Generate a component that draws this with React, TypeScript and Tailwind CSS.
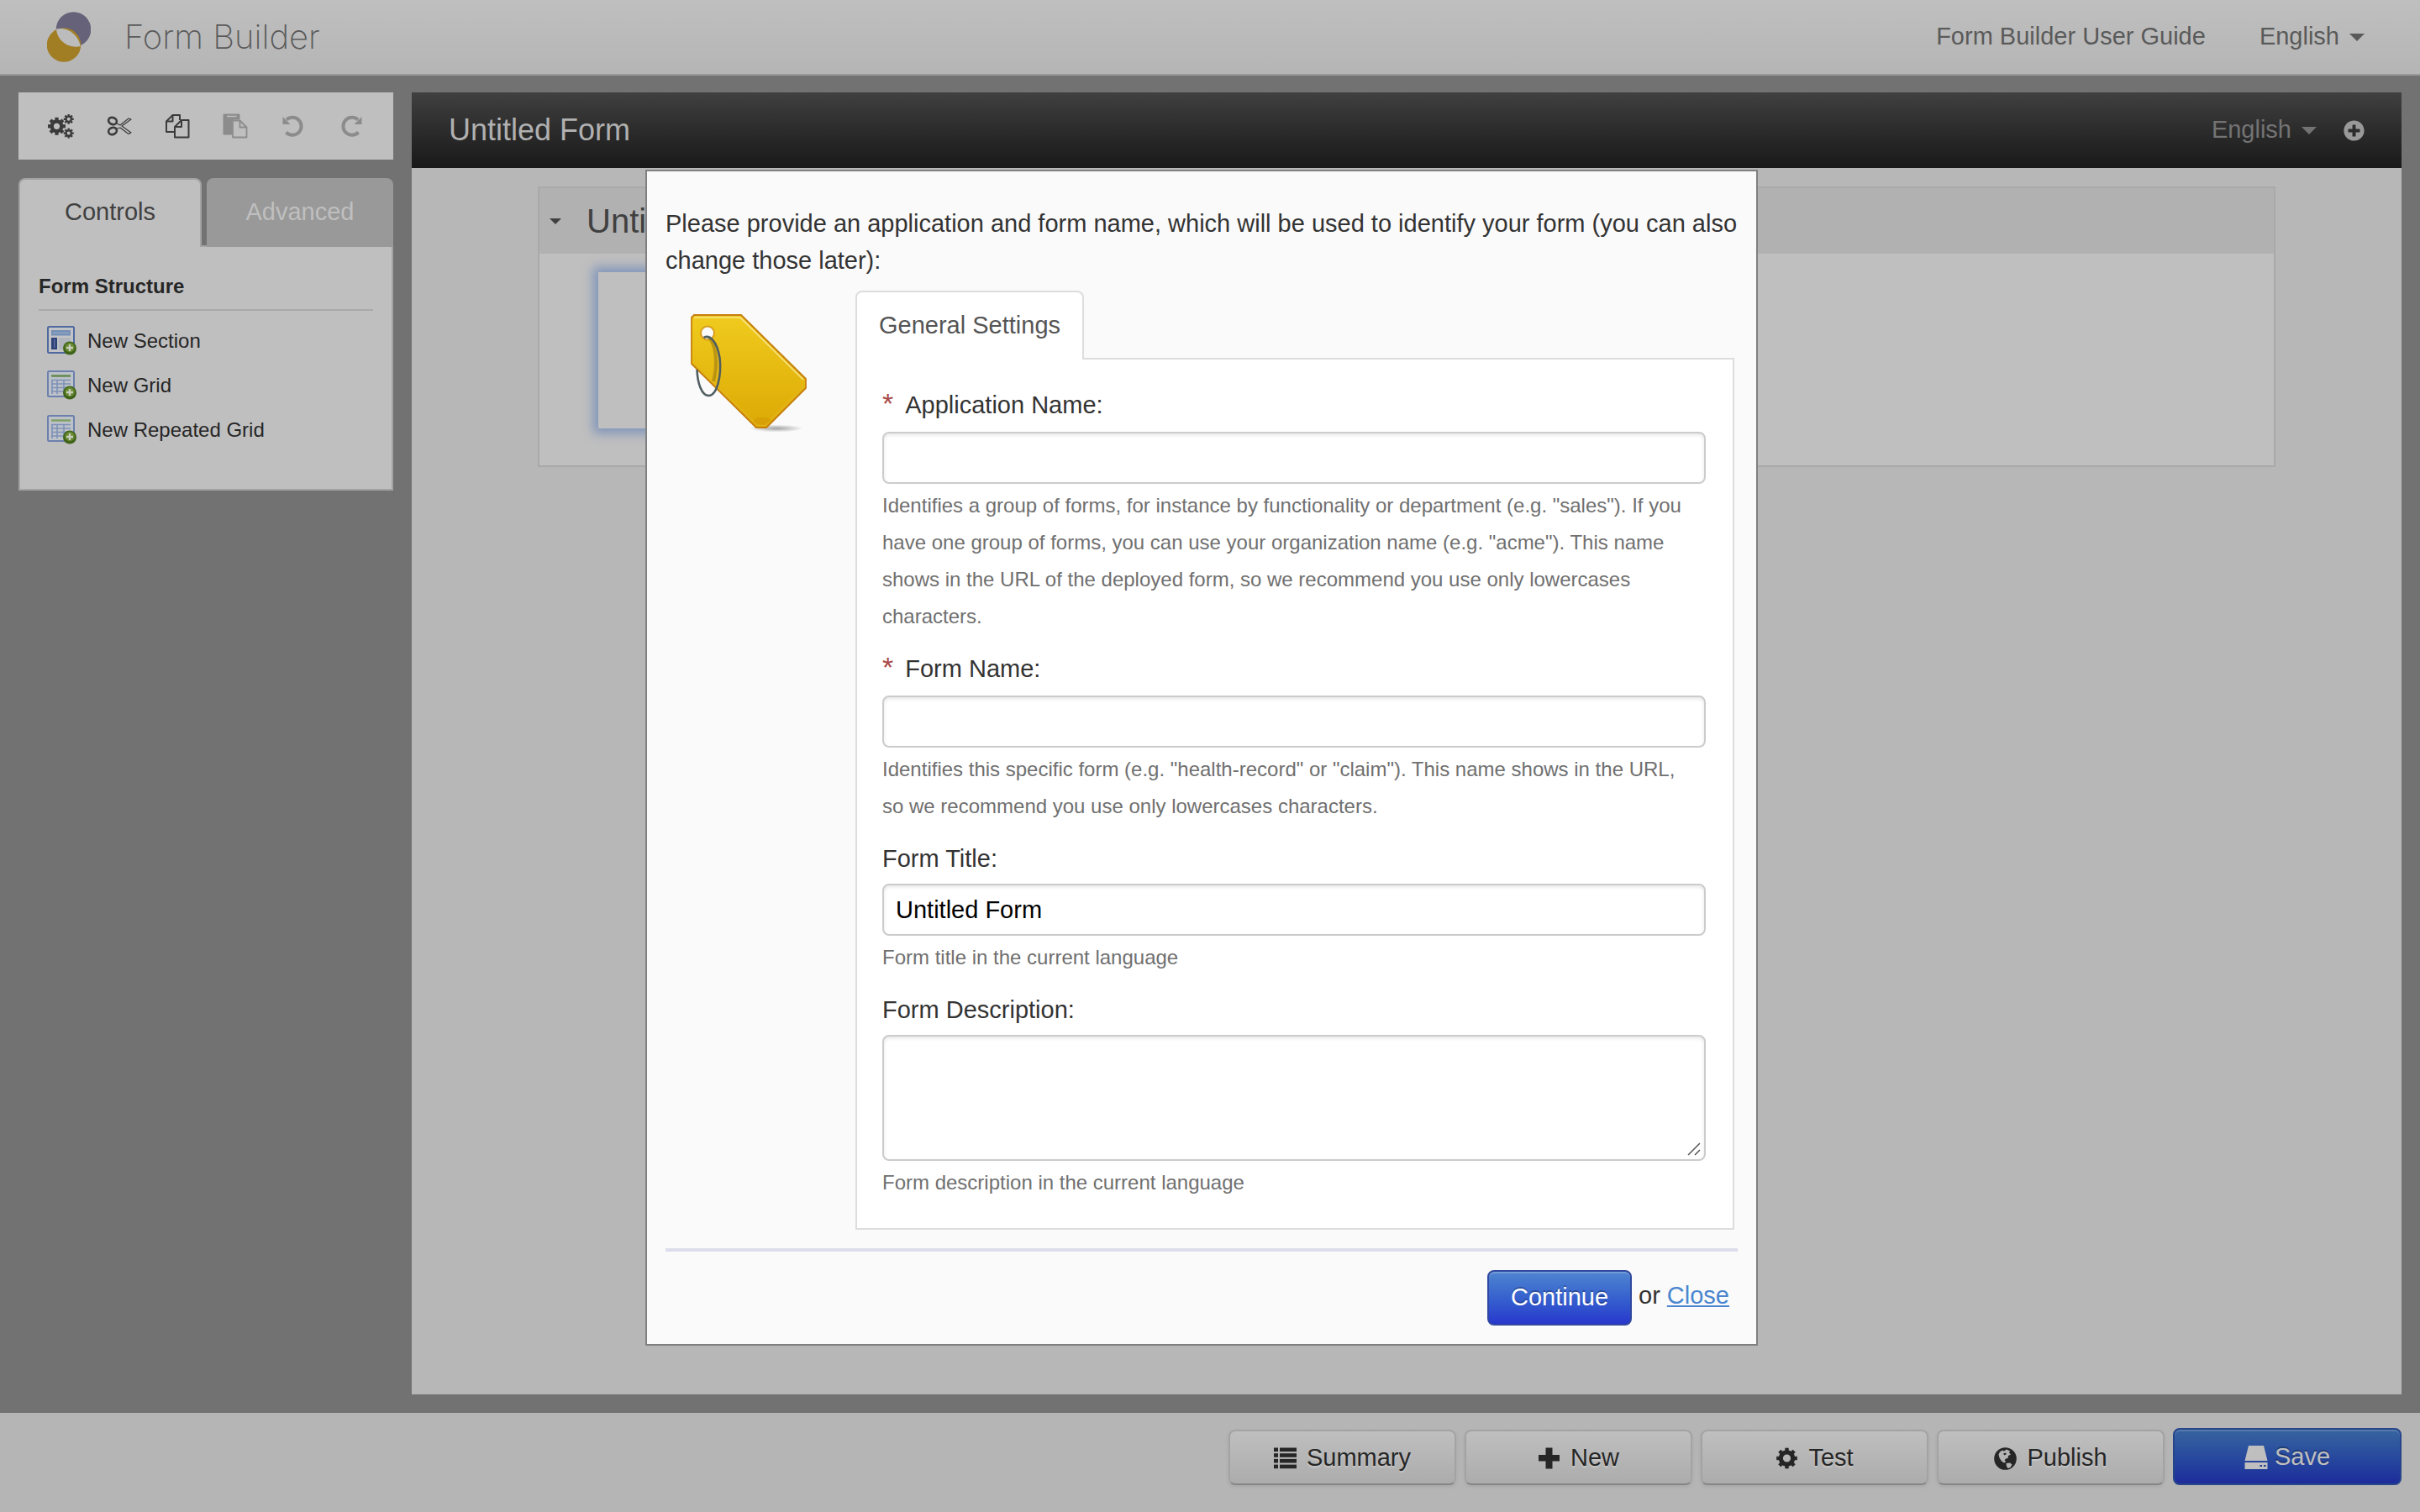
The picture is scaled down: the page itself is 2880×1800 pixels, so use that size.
import { FaPlusCircle } from "react-icons/fa";

function Logo() {
  return (
    <svg className="block" width="52" height="60" viewBox="0 0 52 60" aria-hidden="true">
      <circle cx="31.500" cy="21" r="20.800" fill="#66627a" />
      <circle cx="20" cy="39.500" r="20.300" fill="#a17e24" />
      <path d="M11 20.600C23 17.500 37 26 39.800 41C28 44.500 12 36 11 20.600Z" fill="#bcbcbc" />
    </svg>
  );
}

type GearProps = { cx: number; cy: number; outer: number; body: number; hole: number; tooth: number };

function Gear({ cx, cy, outer, body, hole, tooth }: GearProps) {
  const ring = (body + hole) / 2;
  return (
    <g stroke="currentColor" fill="none">
      <circle cx={cx} cy={cy} r={ring} strokeWidth={body - hole} />
      {[0, 45, 90, 135, 180, 225, 270, 315].map((angle) => (
        <path key={angle} d={`M${cx} ${cy - ring}V${cy - outer}`} strokeWidth={tooth} transform={`rotate(${angle} ${cx} ${cy})`} />
      ))}
    </g>
  );
}

function CogsIcon() {
  return (
    <svg className="block" width="31" height="29" viewBox="0 0 31 29" aria-hidden="true">
      <Gear cx={10.5} cy={14.3} outer={10.5} body={8} hole={3.6} tooth={4.2} />
      <Gear cx={24.7} cy={5.8} outer={6} body={4.3} hole={2} tooth={2.4} />
      <Gear cx={24.7} cy={22.6} outer={6} body={4.3} hole={2} tooth={2.4} />
    </svg>
  );
}

function CogIcon() {
  return (
    <svg className="block" width="27" height="26" viewBox="0 0 27 26" aria-hidden="true">
      <Gear cx={13.5} cy={13} outer={12.3} body={9.8} hole={4.6} tooth={4.4} />
    </svg>
  );
}

function ListIcon() {
  return (
    <svg className="block" width="27" height="26" viewBox="0 0 27 26" fill="currentColor" aria-hidden="true">
      {[0.5, 7.2, 13.9, 20.6].map((y) => (
        <g key={y}>
          <rect x="0" y={y} width="5" height="4.600" />
          <rect x="7" y={y} width="20" height="4.600" />
        </g>
      ))}
    </svg>
  );
}

function PlusIcon() {
  return (
    <svg className="block" width="27" height="26" viewBox="0 0 27 26" fill="currentColor" aria-hidden="true">
      <path d="M9.500 0.500H17.500V9H26V16.500H17.500V25.500H9.500V16.500H1V9H9.500Z" />
    </svg>
  );
}

function GlobeIcon() {
  return (
    <svg className="block" width="27" height="27" viewBox="0 0 27 27" aria-hidden="true">
      <circle cx="13.500" cy="13.500" r="13.300" fill="currentColor" />
      <path d="M7 5.500L10 3.500L12 4.500L15 2.500L19 4.500L18 6.500L20 8.500L17 10L16.500 13L14 13.500L12.500 15.500L14.500 17L12 18.500L9 16.500L6.500 12.500L5.500 8.500Z" fill="#b4b4b4" />
      <path d="M14.500 19L19 18.500L21.500 20.500L19.500 24L16.500 25L15 22.500Z" fill="#b4b4b4" />
      <path d="M11 7.500L13.500 6.500L15 8L12.500 9.500Z" fill="currentColor" />
    </svg>
  );
}

function Scissors() {
  return (
    <svg className="block" width="30" height="24" viewBox="0 0 30 24" fill="none" aria-hidden="true">
      <ellipse cx="7" cy="6" rx="5" ry="4" transform="rotate(22 7 6)" stroke="#3b3b3b" strokeWidth="2.600" />
      <ellipse cx="7" cy="18" rx="5" ry="4" transform="rotate(-22 7 18)" stroke="#3b3b3b" strokeWidth="2.600" />
      <path d="M11 8.500L16 11L26 3L29 4L18 12L29 20L26 21.500L16 14L11 15.500" stroke="#3b3b3b" strokeWidth="1.200" strokeLinejoin="round" />
    </svg>
  );
}

function CopyIcon() {
  return (
    <svg className="block" width="30" height="30" viewBox="0 0 30 30" fill="none" stroke="#3b3b3b" strokeWidth="2" strokeLinejoin="round" aria-hidden="true">
      <path d="M11.500 22H2V9.500L9.500 2H18V8" />
      <path d="M9.500 2V9.500H2" />
      <path d="M12 16L20 8H28.500V28.500H12Z" />
      <path d="M20 8V16H12" />
    </svg>
  );
}

function PasteIcon() {
  return (
    <svg className="block" width="30" height="30" viewBox="0 0 30 30" fill="none" aria-hidden="true">
      <path d="M1 1H20V7H12L11 8V25H1Z" fill="#8c8c8c" stroke="#8c8c8c" strokeLinejoin="round" />
      <path d="M5 3.500H16.500" stroke="#bfbfbf" strokeWidth="1.500" />
      <path d="M12 8.500H20.500L28.500 16.500V28.500H12Z" fill="#bfbfbf" stroke="#8c8c8c" strokeWidth="1.800" strokeLinejoin="round" />
      <path d="M20.500 8.500V16.500H28.500" stroke="#8c8c8c" strokeWidth="1.800" />
    </svg>
  );
}

function UndoIcon({ flip }: { flip?: boolean }) {
  return (
    <svg className={flip ? "block -scale-x-100" : "block"} width="26" height="26" viewBox="0 0 26 26" fill="none" aria-hidden="true">
      <path d="M5 5.500A10.500 10.500 0 1 1 4.500 20.500" stroke="#8c8c8c" strokeWidth="4" />
      <path d="M0.500 2V11H9.500Z" fill="#8c8c8c" />
    </svg>
  );
}

function AddBadge() {
  return (
    <g>
      <circle cx="27" cy="26.500" r="8" fill="#40631a" />
      <circle cx="27" cy="25.500" r="5.800" fill="#66882f" />
      <path d="M27 22V30M23 26H31" stroke="#c9cdbf" strokeWidth="2.400" />
    </g>
  );
}

function SectionIcon() {
  return (
    <svg className="block" width="36" height="36" viewBox="0 0 36 36" aria-hidden="true">
      <rect x="1" y="1" width="31" height="31" rx="1.500" fill="#c2c3c6" stroke="#4f68a0" strokeWidth="2" />
      <rect x="5" y="5" width="23" height="6.500" fill="#7590b5" />
      <rect x="7" y="7" width="19" height="2.500" fill="#869dbe" />
      <rect x="5" y="14" width="7" height="14" fill="#2f437b" />
      <rect x="8" y="16" width="1.500" height="10" fill="#5a6d99" />
      <rect x="14" y="14" width="14" height="14" fill="#b1b5bd" />
      <AddBadge />
    </svg>
  );
}

function GridIcon({ light }: { light?: boolean }) {
  return (
    <svg className="block" width="36" height="36" viewBox="0 0 36 36" aria-hidden="true">
      <rect x="1" y="1" width="31" height="30" rx="1.500" fill="#bdc2c9" stroke="#6c80ad" strokeWidth="2" />
      <path d="M5 6.500H28" stroke={light ? "#81a065" : "#62894a"} strokeWidth="2.500" />
      <path d="M5 11.500H28M5 16H28M5 20.500H28M5 25H28M6 11V28M12 11V28M20 11V28" stroke="#7e91b8" strokeWidth="1.600" fill="none" />
      <AddBadge />
    </svg>
  );
}

function TagIcon() {
  return (
    <svg className="block" width="142" height="142" viewBox="0 0 142 142" fill="none" aria-hidden="true">
      <defs>
        <linearGradient id="tagFill" x1="0" y1="0" x2="0" y2="1">
          <stop offset="0" stopColor="#f0cb1e" />
          <stop offset="1" stopColor="#dca904" />
        </linearGradient>
        <radialGradient id="tagShadow">
          <stop offset="0" stopColor="#000" stopOpacity="0.350" />
          <stop offset="1" stopColor="#000" stopOpacity="0" />
        </radialGradient>
      </defs>
      <ellipse cx="102" cy="136" rx="32" ry="4.500" fill="url(#tagShadow)" />
      <path d="M4 1H60L137 77V88L90 135H78L1 59V4Z" fill="url(#tagFill)" stroke="#c67f0d" strokeWidth="1.800" strokeLinejoin="round" />
      <path d="M4 4H59L134 78" stroke="#f9e58a" strokeWidth="1.600" />
      <path d="M4 59L79 132H89L134 87" stroke="#e4b61c" strokeWidth="1.500" />
      <path d="M79 123H89L96 126L89 132H79L74 127Z" fill="#d49a06" opacity="0.600" />
      <circle cx="20" cy="22.500" r="8" fill="#fafafa" stroke="#d79d1b" strokeWidth="2" />
      <path d="M22 28C31 38 32 62 27 80" stroke="#a88412" strokeWidth="4" opacity="0.700" />
      <path d="M15.500 28C22 24 31 31 34.500 52C37 74 31 97 21.500 97C13 97 8 82 7.500 66" stroke="#505e60" strokeWidth="2.600" />
    </svg>
  );
}

function DriveIcon() {
  return (
    <svg className="block" width="28" height="28" viewBox="0 0 28 28" aria-hidden="true">
      <path d="M5 0H23L27.500 18H0.500Z" fill="#bfbfbf" />
      <path d="M0.500 20H27.500V28H0.500Z" fill="#bfbfbf" />
      <path d="M18.500 24H21M23 24H25.500" stroke="#26399a" strokeWidth="2" />
    </svg>
  );
}

function Caret({ width = 18 }: { width?: number }) {
  return (
    <svg className="block" width={width} height={width / 2} viewBox="0 0 18 9" aria-hidden="true">
      <path d="M0 0H18L9 9Z" fill="currentColor" />
    </svg>
  );
}

const toolButton = "flex h-full w-[69px] items-center justify-center text-[#3b3b3b]";

const footerButton =
  "flex h-[66px] w-[271px] items-center justify-center gap-3 rounded-lg border-2 border-[#a3a3a3] border-b-[#868686] bg-linear-to-b from-[#bfbfbf] to-[#acacac] pt-0.5 text-[#262626] shadow-[0_2px_4px_rgba(0,0,0,0.08)] [text-shadow:0_2px_2px_rgba(255,255,255,0.3)]";

const field =
  "block w-full rounded-lg border-2 border-[#ccc] bg-white px-3.5 text-black shadow-[inset_0_2px_4px_rgba(0,0,0,0.1)] outline-none";

const hint = "mt-1 pr-2 text-[24px] leading-[44px] text-[#707070]";
const label = "block leading-[44px] text-[#333]";

function Required() {
  return <span className="mr-3.5 text-[34px] leading-none text-[#a94a48]">*</span>;
}

export default function App() {
  return (
    <div className="relative flex min-h-screen flex-col bg-[#727272] font-['Liberation_Sans',Arial,sans-serif] text-[29px] text-[#262626]">
      <header className="flex h-[90px] items-center border-b-2 border-[#999] bg-linear-to-b from-[#bfbfbf] to-[#b5b5b5] px-14 text-[#5a5a5a]">
        <Logo />
        <h1 className="ml-10 font-['Inter',sans-serif] text-[40px] font-extralight">Form Builder</h1>
        <nav className="ml-auto flex items-center gap-16 pr-2.5">
          <a href="#guide">Form Builder User Guide</a>
          <button type="button" className="flex items-center gap-3">
            English
            <Caret />
          </button>
        </nav>
      </header>

      <div className="flex grow gap-[22px] px-[22px] pt-5 pb-[22px]">
        <aside className="w-[446px] shrink-0">
          <div className="flex h-20 items-center bg-[#bfbfbf] pl-4">
            <button type="button" aria-label="Settings" className={toolButton}><CogsIcon /></button>
            <button type="button" aria-label="Cut" className={toolButton}><Scissors /></button>
            <button type="button" aria-label="Copy" className={toolButton}><CopyIcon /></button>
            <button type="button" aria-label="Paste" className={toolButton}><PasteIcon /></button>
            <button type="button" aria-label="Undo" className={toolButton}><UndoIcon /></button>
            <button type="button" aria-label="Redo" className={toolButton}><UndoIcon flip /></button>
          </div>
          <div role="tablist" className="mt-[22px] flex gap-1.5">
            <button type="button" role="tab" aria-selected="true" className="z-10 -mb-0.5 h-[82px] w-[218px] rounded-t-lg border-2 border-b-0 border-[#a3a3a3] bg-[#bfbfbf] pb-0.5 text-[#404040]">
              Controls
            </button>
            <button type="button" role="tab" aria-selected="false" className="z-10 -mb-0.5 h-[82px] grow rounded-t-lg bg-[#999] text-[#bfbfbf]">
              Advanced
            </button>
          </div>
          <div className="border-2 border-[#a3a3a3] bg-[#bfbfbf] px-[22px] pt-[26px] pb-[52px] text-[24px]">
            <h2 className="border-b-2 border-[#a9a9a9] pb-1.5 leading-[42px] font-bold">Form Structure</h2>
            <ul className="flex flex-col gap-[17px] pt-[18px] pl-2.5">
              <li><button type="button" className="flex items-center gap-3"><SectionIcon />New Section</button></li>
              <li><button type="button" className="flex items-center gap-3"><GridIcon />New Grid</button></li>
              <li><button type="button" className="flex items-center gap-3"><GridIcon light />New Repeated Grid</button></li>
            </ul>
          </div>
        </aside>

        <main className="grow bg-[#b7b7b7]">
          <div className="flex h-[90px] items-center bg-linear-to-b from-[#404040] to-[#191919] px-11 text-[#737373]">
            <h2 className="text-[36px] text-[#b0b0b0]">Untitled Form</h2>
            <button type="button" className="ml-auto flex items-center gap-3">
              English
              <Caret />
            </button>
            <button type="button" aria-label="Add language" className="ml-8 text-[#999]"><FaPlusCircle size={25} /></button>
          </div>
          <section className="mx-[150px] mt-[22px] border-2 border-[#a9a9a9] bg-[#bfbfbf] pb-11">
            <div className="flex h-[78px] items-center bg-[#b1b1b1] pl-3 text-[#404040]">
              <Caret width={14} />
              <h3 className="ml-[30px] text-[40px]">Untitled Section</h3>
            </div>
            <div className="mt-[22px] ml-[70px] h-[186px] w-1/2 bg-[#bfbfbf] shadow-[0_0_12px_6px_#8095ba]" />
          </section>
        </main>
      </div>

      <footer className="flex h-[118px] items-start justify-end gap-2.5 bg-[#b5b5b5] px-[22px] pt-5">
        <button type="button" className={footerButton}><ListIcon />Summary</button>
        <button type="button" className={footerButton}><PlusIcon />New</button>
        <button type="button" className={footerButton}><CogIcon />Test</button>
        <button type="button" className={footerButton}><GlobeIcon />Publish</button>
        <button type="button" className="-mt-0.5 flex h-[68px] w-[272px] items-center justify-center gap-2 rounded-lg border-2 border-[#26458a] bg-linear-to-b from-[#38649f] to-[#1e2a9b] pt-0.5 text-[#bfbfbf] shadow-[inset_0_2px_0_rgba(255,255,255,0.15)] [text-shadow:0_-2px_0_rgba(0,0,0,0.25)]">
          <DriveIcon />Save
        </button>
      </footer>

      <div role="dialog" aria-label="Form settings" className="absolute top-[202px] left-1/2 z-20 w-[1324px] -translate-x-[672px] border-2 border-[#808080] bg-[#fafafa] px-[22px] pt-10 text-[#333]">
        <p className="-mr-3 leading-[44px]">
          Please provide an application and form name, which will be used to identify your form (you can also change those later):
        </p>
        <div className="flex pt-3.5">
          <div className="w-[226px] shrink-0 pt-7 pl-[30px]"><TagIcon /></div>
          <div className="mr-1 grow">
            <div role="tablist" className="flex">
              <button type="button" role="tab" aria-selected="true" className="z-10 -mb-0.5 h-[82px] rounded-t-lg border-2 border-b-0 border-[#ddd] bg-white px-[26px] text-[#555]">
                General Settings
              </button>
            </div>
            <form className="border-2 border-[#ddd] bg-white py-8 pr-8 pl-[30px]" onSubmit={(e) => e.preventDefault()}>
              <label htmlFor="app" className={label}><Required />Application Name:</label>
              <input id="app" className={`${field} mt-2.5 h-[62px]`} />
              <p className={hint}>
                Identifies a group of forms, for instance by functionality or department (e.g. "sales"). If you have one group of forms, you can use your organization name (e.g. "acme"). This name shows in the URL of the deployed form, so we recommend you use only lowercases characters.
              </p>
              <label htmlFor="form" className={`${label} mt-[18px]`}><Required />Form Name:</label>
              <input id="form" className={`${field} mt-2.5 h-[62px]`} />
              <p className={hint}>
                Identifies this specific form (e.g. "health-record" or "claim"). This name shows in the URL, so we recommend you use only lowercases characters.
              </p>
              <label htmlFor="title" className={`${label} mt-[18px]`}>Form Title:</label>
              <input id="title" defaultValue="Untitled Form" className={`${field} mt-2 h-[62px]`} />
              <p className={hint}>Form title in the current language</p>
              <label htmlFor="desc" className={`${label} mt-[18px]`}>Form Description:</label>
              <div className="relative mt-2">
                <textarea id="desc" className={`${field} h-[150px] resize-none`} />
                <svg className="pointer-events-none absolute right-1.5 bottom-1.5" width="16" height="16" viewBox="0 0 16 16" stroke="#555" strokeWidth="1.500" aria-hidden="true">
                  <path d="M1 15L15 1M9 15L15 9" />
                </svg>
              </div>
              <p className={hint}>Form description in the current language</p>
            </form>
          </div>
        </div>
        <div className="mt-[22px] flex items-start justify-end gap-2 border-t-4 border-[#dde] pt-[22px] pr-2.5 pb-[22px]">
          <button type="button" className="h-[66px] w-[172px] rounded-lg border-2 border-[#30489f] bg-linear-to-b from-[#4f84cf] to-[#2936cc] text-white shadow-[inset_0_2px_0_rgba(255,255,255,0.2)] [text-shadow:0_-2px_0_rgba(0,0,0,0.25)]">
            Continue
          </button>
          <p className="pt-2 leading-[44px]">or <a href="#close" className="text-[#4a86cf] underline">Close</a></p>
        </div>
      </div>
    </div>
  );
}
